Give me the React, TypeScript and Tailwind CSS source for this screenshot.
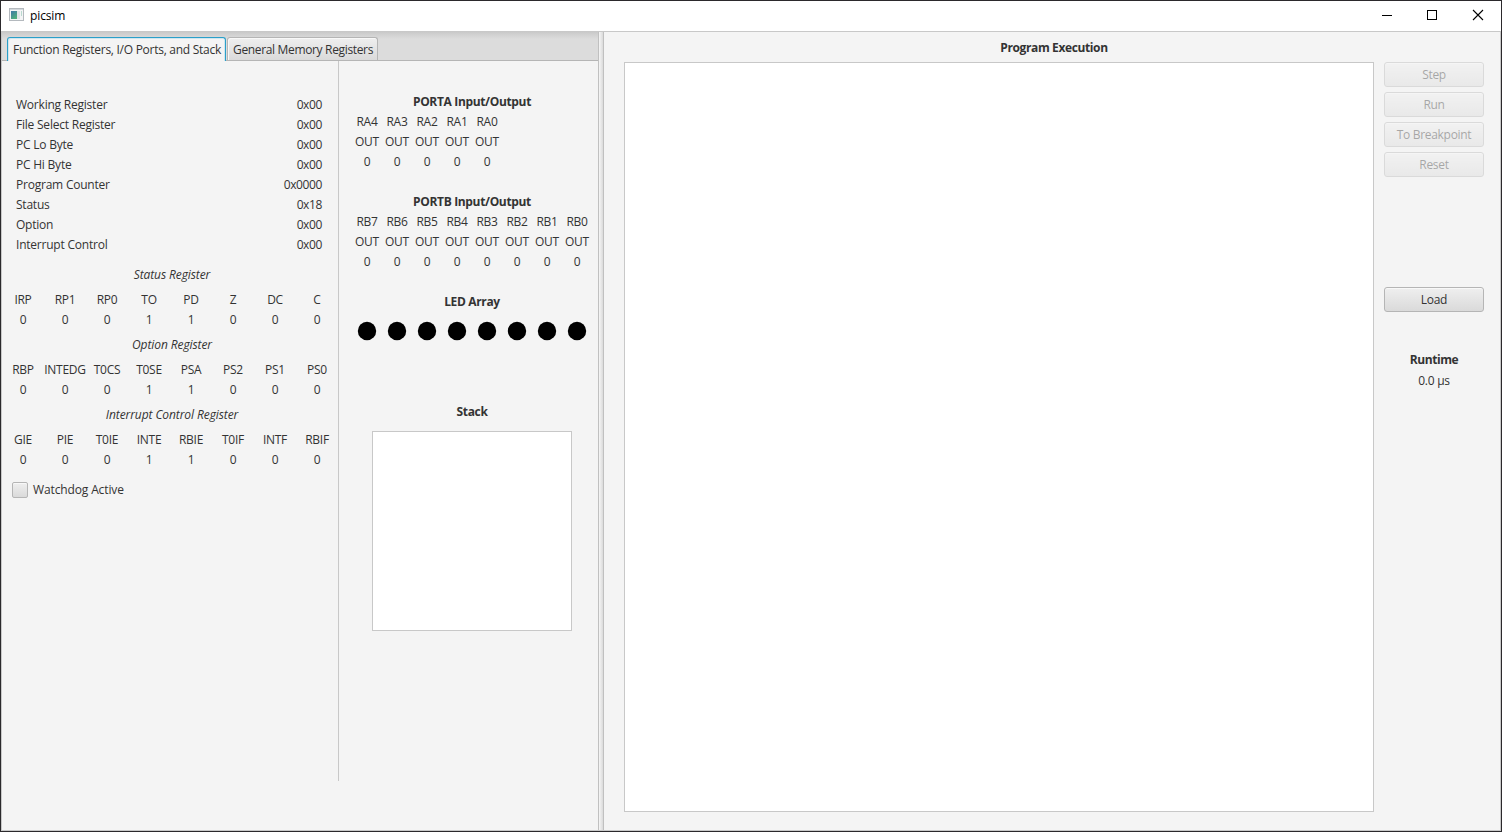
type Bit = [name: string, value: number];

const registers: [string, string][] = [
  ["Working Register", "0x00"],
  ["File Select Register", "0x00"],
  ["PC Lo Byte", "0x00"],
  ["PC Hi Byte", "0x00"],
  ["Program Counter", "0x0000"],
  ["Status", "0x18"],
  ["Option", "0x00"],
  ["Interrupt Control", "0x00"],
];

const bitRegisters: { title: string; bits: Bit[] }[] = [
  {
    title: "Status Register",
    bits: [["IRP", 0], ["RP1", 0], ["RP0", 0], ["TO", 1], ["PD", 1], ["Z", 0], ["DC", 0], ["C", 0]],
  },
  {
    title: "Option Register",
    bits: [["RBP", 0], ["INTEDG", 0], ["T0CS", 0], ["T0SE", 1], ["PSA", 1], ["PS2", 0], ["PS1", 0], ["PS0", 0]],
  },
  {
    title: "Interrupt Control Register",
    bits: [["GIE", 0], ["PIE", 0], ["T0IE", 0], ["INTE", 1], ["RBIE", 1], ["T0IF", 0], ["INTF", 0], ["RBIF", 0]],
  },
];

const portA = ["RA4", "RA3", "RA2", "RA1", "RA0"];
const portB = ["RB7", "RB6", "RB5", "RB4", "RB3", "RB2", "RB1", "RB0"];

function TitleBar() {
  return (
    <header className="flex h-[31px] shrink-0 items-center border-b border-[#c8c8c8] bg-white">
      <svg className="mb-[3px] ml-2 h-[13px] w-[15px]" viewBox="0 0 15 13" shapeRendering="crispEdges">
        <defs>
          <linearGradient id="appPane" x1="0" y1="0" x2="0.6" y2="1">
            <stop offset="0" stopColor="#3f78a8" />
            <stop offset="1" stopColor="#4fae7c" />
          </linearGradient>
        </defs>
        <rect x="0.5" y="0.5" width="14" height="12" fill="#f4f5f6" stroke="#b4b9be" />
        <rect x="1" y="1" width="13" height="1" fill="#d3d8dc" />
        <rect x="2" y="3" width="6" height="8" fill="url(#appPane)" />
        <rect x="8" y="3" width="3" height="8" fill="#dfe3e6" />
        <rect x="12" y="3" width="1" height="5" fill="#b9d9cf" />
      </svg>
      <span className="ml-1.5 tracking-[-0.12px] text-black">picsim</span>
      <div className="ml-auto flex text-black">
        <svg className="h-[30px] w-[46px]" viewBox="0 0 46 30" shapeRendering="crispEdges">
          <path d="M18 14.5h10" stroke="currentColor" />
        </svg>
        <svg className="h-[30px] w-[45px]" viewBox="0 0 45 30" shapeRendering="crispEdges">
          <rect x="17.5" y="9.5" width="9" height="9" fill="none" stroke="currentColor" />
        </svg>
        <svg className="h-[30px] w-[46px]" viewBox="0 0 46 30">
          <path d="M18 9l10 10M28 9l-10 10" stroke="currentColor" strokeWidth="1.1" />
        </svg>
      </div>
    </header>
  );
}

function Tabs() {
  return (
    <div className="flex h-[29px] items-end gap-px border-b border-[#b5b5b5] bg-[linear-gradient(#c9c9c9,#d2d2d2_3px,#dcdcdc_7px,#dcdcdc)] pl-[5px]">
      <button className="relative -mb-px h-[24px] w-[219px] rounded-t-[3px] border border-b-0 border-[#2a9fc9] bg-[#f4f4f4] pl-[5px] text-left whitespace-nowrap shadow-[inset_1px_1px_0_#cfe6ef,inset_-1px_0_0_#cfe6ef]">
        <span className="tracking-[-0.27px]">Function Registers, I/O Ports, and Stack</span>
      </button>
      <button className="h-[23px] w-[151px] rounded-t-[3px] border border-b-0 border-[#b5b5b5] bg-linear-to-b from-[#efefef] to-[#dadada] pt-[2px] pl-[5px] text-left whitespace-nowrap shadow-[inset_1px_1px_0_#f8f8f8]">
        <span className="tracking-[-0.34px]">General Memory Registers</span>
      </button>
    </div>
  );
}

function BitTable({ title, bits }: { title: string; bits: Bit[] }) {
  return (
    <section className="mb-[5px]">
      <h3 className="mb-[5px] pl-1 text-center tracking-[-0.09px] italic">{title}</h3>
      <div className="grid grid-cols-[repeat(8,42px)]">
        {bits.map(([name, value]) => (
          <div key={name} className="text-center">
            <div>{name}</div>
            <div>{value}</div>
          </div>
        ))}
      </div>
    </section>
  );
}

function RegisterColumn() {
  return (
    <div className="h-[720px] w-[337px] border-r border-[#c8c8c8] pt-[34px]">
      <div className="pr-4 pl-3.5">
        {registers.map(([name, value]) => (
          <div key={name} className="flex justify-between">
            <span className="tracking-[-0.22px]">{name}</span>
            <span className="tracking-[-0.38px]">{value}</span>
          </div>
        ))}
      </div>
      <div className="mt-2.5 w-[336px]">
        {bitRegisters.map((r) => (
          <BitTable key={r.title} {...r} />
        ))}
      </div>
      <label className="mt-2.5 flex items-center pl-2.5">
        <span className="size-4 rounded-[2px] border border-[#b5b5b5] bg-linear-to-b from-[#efefef] to-[#dadada] shadow-[inset_0_1px_0_#f8f8f8]" />
        <span className="ml-[5px] tracking-[-0.13px]">Watchdog Active</span>
      </label>
    </div>
  );
}

function Heading({ children }: { children: string }) {
  return <h3 className="text-center font-bold tracking-[-0.34px]">{children}</h3>;
}

function Port({ title, pins }: { title: string; pins: string[] }) {
  return (
    <section className="mb-5">
      <Heading>{title}</Heading>
      <div className="grid grid-cols-8">
        {pins.map((pin) => (
          <div key={pin} className="text-center">
            <div>{pin}</div>
            <div>OUT</div>
            <div>0</div>
          </div>
        ))}
      </div>
    </section>
  );
}

function PortColumn() {
  return (
    <div className="ml-[13px] w-[240px] pt-[31px]">
      <Port title="PORTA Input/Output" pins={portA} />
      <Port title="PORTB Input/Output" pins={portB} />
      <Heading>LED Array</Heading>
      <div className="grid grid-cols-8 justify-items-center">
        {portB.map((pin) => (
          <svg key={pin} className="h-[38px] w-[30px]" viewBox="0 0 30 38">
            <circle cx="15" cy="19" r="9.2" fill="#000" />
          </svg>
        ))}
      </div>
      <div className="mt-[52px]">
        <Heading>Stack</Heading>
      </div>
      <div className="mx-auto mt-[9px] size-[200px] border border-[#c8c8c8] bg-white" />
    </div>
  );
}

function Button({ children, disabled = false }: { children: string; disabled?: boolean }) {
  return (
    <button
      disabled={disabled}
      className="h-[25px] w-[100px] rounded-[3px] border border-[#b5b5b5] bg-linear-to-b from-[#efefef] to-[#dadada] leading-[22px] tracking-[-0.3px] shadow-[inset_0_1px_0_#f8f8f8] disabled:opacity-40"
    >
      {children}
    </button>
  );
}

export default function App() {
  return (
    <div className="flex h-[832px] w-[1502px] flex-col overflow-hidden border border-[#2b292c] bg-[#f4f4f4] font-['Open_Sans',sans-serif] text-[12px] leading-[20px] tracking-[-0.27px] text-[#333333]">
      <TitleBar />
      <main className="flex min-h-0 flex-1 border-r border-b border-l border-[#c8c8c8]">
        <div className="w-[596px]">
          <Tabs />
          <div className="flex">
            <RegisterColumn />
            <PortColumn />
          </div>
        </div>
        <div className="w-[6px] border-r border-l border-[#c0c0c0] bg-linear-to-r from-[#f6f6f6] to-[#dadada]" />
        <div className="flex flex-1 pl-5">
          <div className="pt-[6px]">
            <h2 className="w-[860px] text-center font-bold tracking-[-0.38px]">Program Execution</h2>
            <div className="mt-1 flex gap-2.5">
              <div className="h-[750px] w-[750px] border border-[#c8c8c8] bg-white" />
              <aside className="flex w-[100px] flex-col text-center">
                <div className="flex flex-col gap-[5px]">
                  <Button disabled>Step</Button>
                  <Button disabled>Run</Button>
                  <Button disabled>To Breakpoint</Button>
                  <Button disabled>Reset</Button>
                </div>
                <div className="mt-[110px]">
                  <Button>Load</Button>
                </div>
                <h3 className="mt-[38px] font-bold tracking-[-0.45px]">Runtime</h3>
                <p className="mt-px">0.0 µs</p>
              </aside>
            </div>
          </div>
        </div>
      </main>
    </div>
  );
}
